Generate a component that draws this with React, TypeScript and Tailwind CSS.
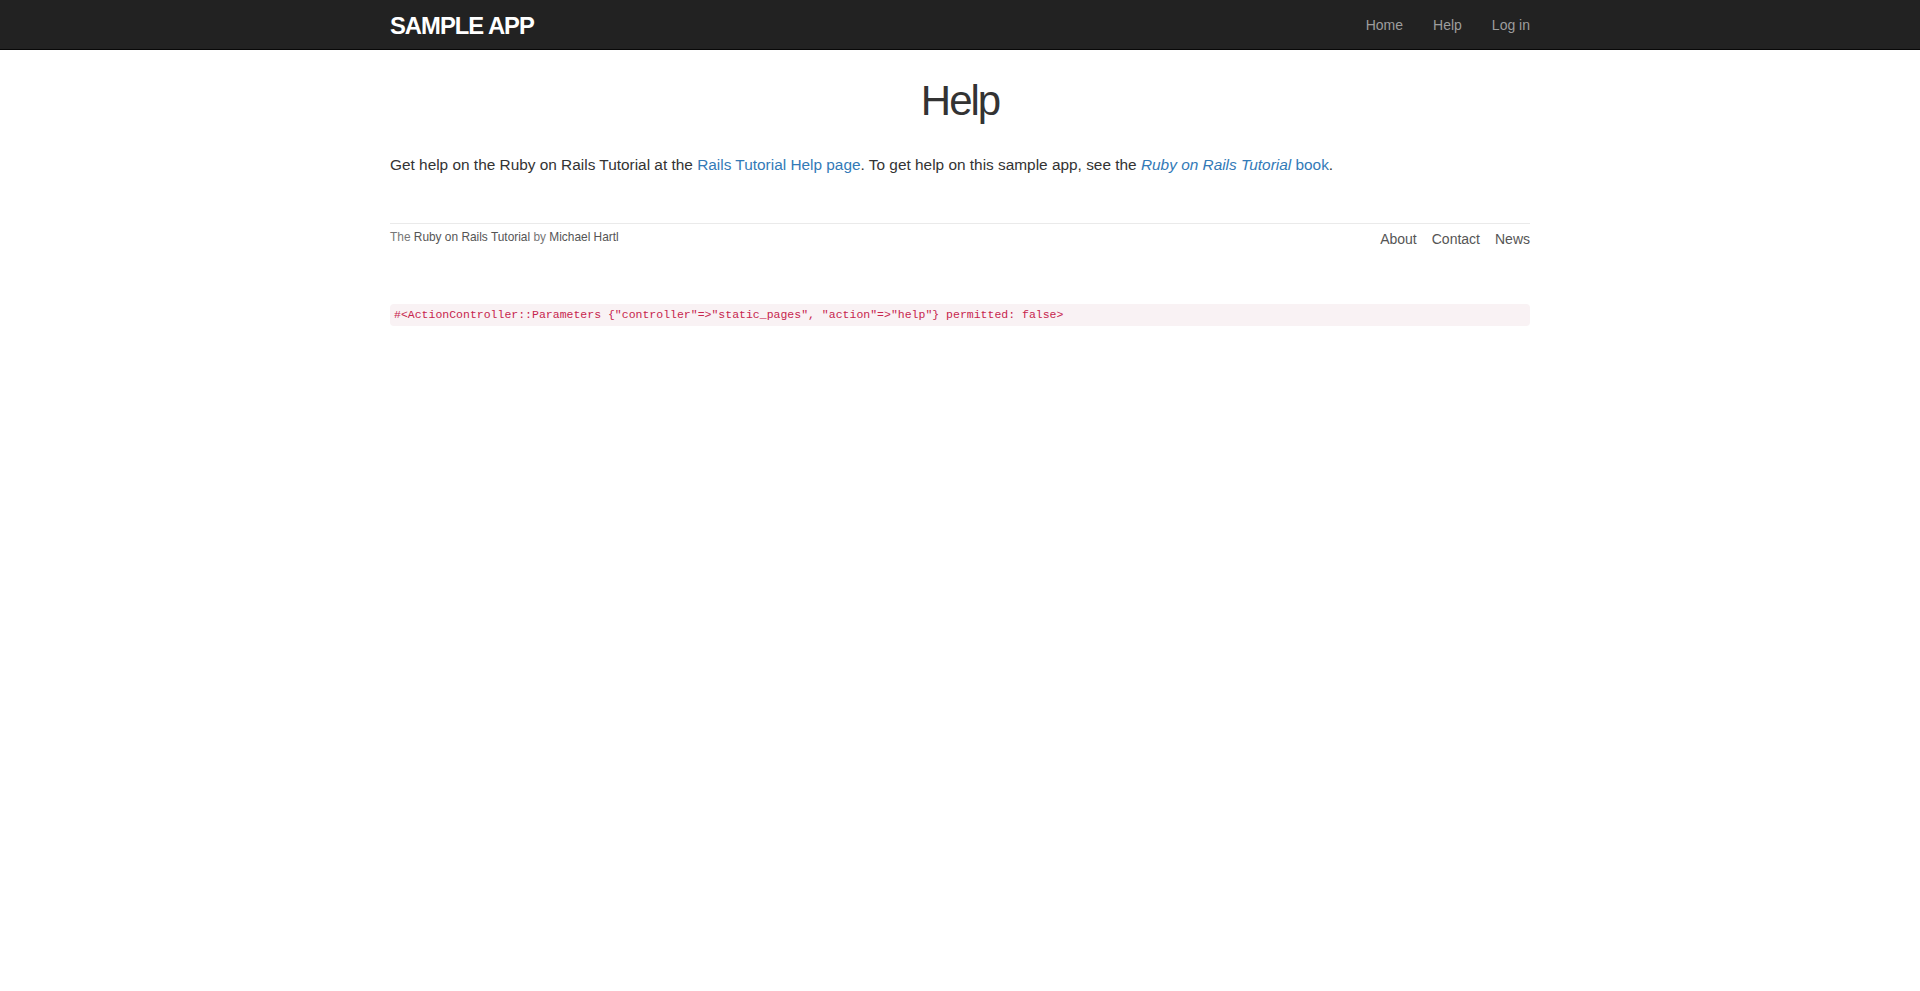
export default function App() {
  return (
    <div className="min-h-screen bg-white text-[14px] leading-[20px] text-[#333] font-['Liberation_Sans',Arial,sans-serif]">
      {/* Navbar */}
      <header className="h-[50px] border-b border-[#080808] bg-[#222]">
        <div className="mx-auto flex w-[1170px] items-start justify-between px-[15px]">
          <a
            href="#"
            className="pt-[9px] text-[23.8px] font-bold uppercase leading-[34px] tracking-[-1px] text-white"
          >
            sample app
          </a>
          <nav className="-mr-[15px] flex">
            <a href="#" className="p-[15px] text-[#9d9d9d]">Home</a>
            <a href="#" className="p-[15px] text-[#9d9d9d]">Help</a>
            <a href="#" className="p-[15px] text-[#9d9d9d]">Log in</a>
          </nav>
        </div>
      </header>

      <div className="mx-auto w-[1170px] px-[15px] pt-[30px]">
        <h1 className="text-center text-[42px] leading-none tracking-[-2px]">Help</h1>
        <p className="mt-[30px] mb-[10px] text-[15.4px] leading-[26.18px]">
          Get help on the Ruby on Rails Tutorial at the{' '}
          <a href="#" className="text-[#337ab7]">Rails Tutorial Help page</a>. To get help on this sample app,
          see the{' '}
          <a href="#" className="text-[#337ab7]">
            <em>Ruby on Rails Tutorial</em> book
          </a>
          .
        </p>

        {/* Footer */}
        <footer className="mt-[45px] flex items-start justify-between border-t border-[#eaeaea] pt-[5px] text-[#777]">
          <small className="text-[11.9px] leading-[17px]">
            The <a href="#" className="text-[#555]">Ruby on Rails Tutorial</a> by{' '}
            <a href="#" className="text-[#555]">Michael Hartl</a>
          </small>
          <ul className="mb-[10px] flex">
            <li className="ml-[15px]"><a href="#" className="text-[#555]">About</a></li>
            <li className="ml-[15px]"><a href="#" className="text-[#555]">Contact</a></li>
            <li className="ml-[15px]"><a href="#" className="text-[#555]">News</a></li>
          </ul>
        </footer>

        {/* Debug dump */}
        <div className="mt-[45px]">
          <code className="block rounded-[4px] bg-[#f9f2f4] px-[4px] py-[2px] font-['Liberation_Mono',Consolas,monospace] text-[11.5px] leading-[18px] text-[#c7254e]">
            {'#<ActionController::Parameters {"controller"=>"static_pages", "action"=>"help"} permitted: false>'}
          </code>
        </div>
      </div>
    </div>
  )
}
